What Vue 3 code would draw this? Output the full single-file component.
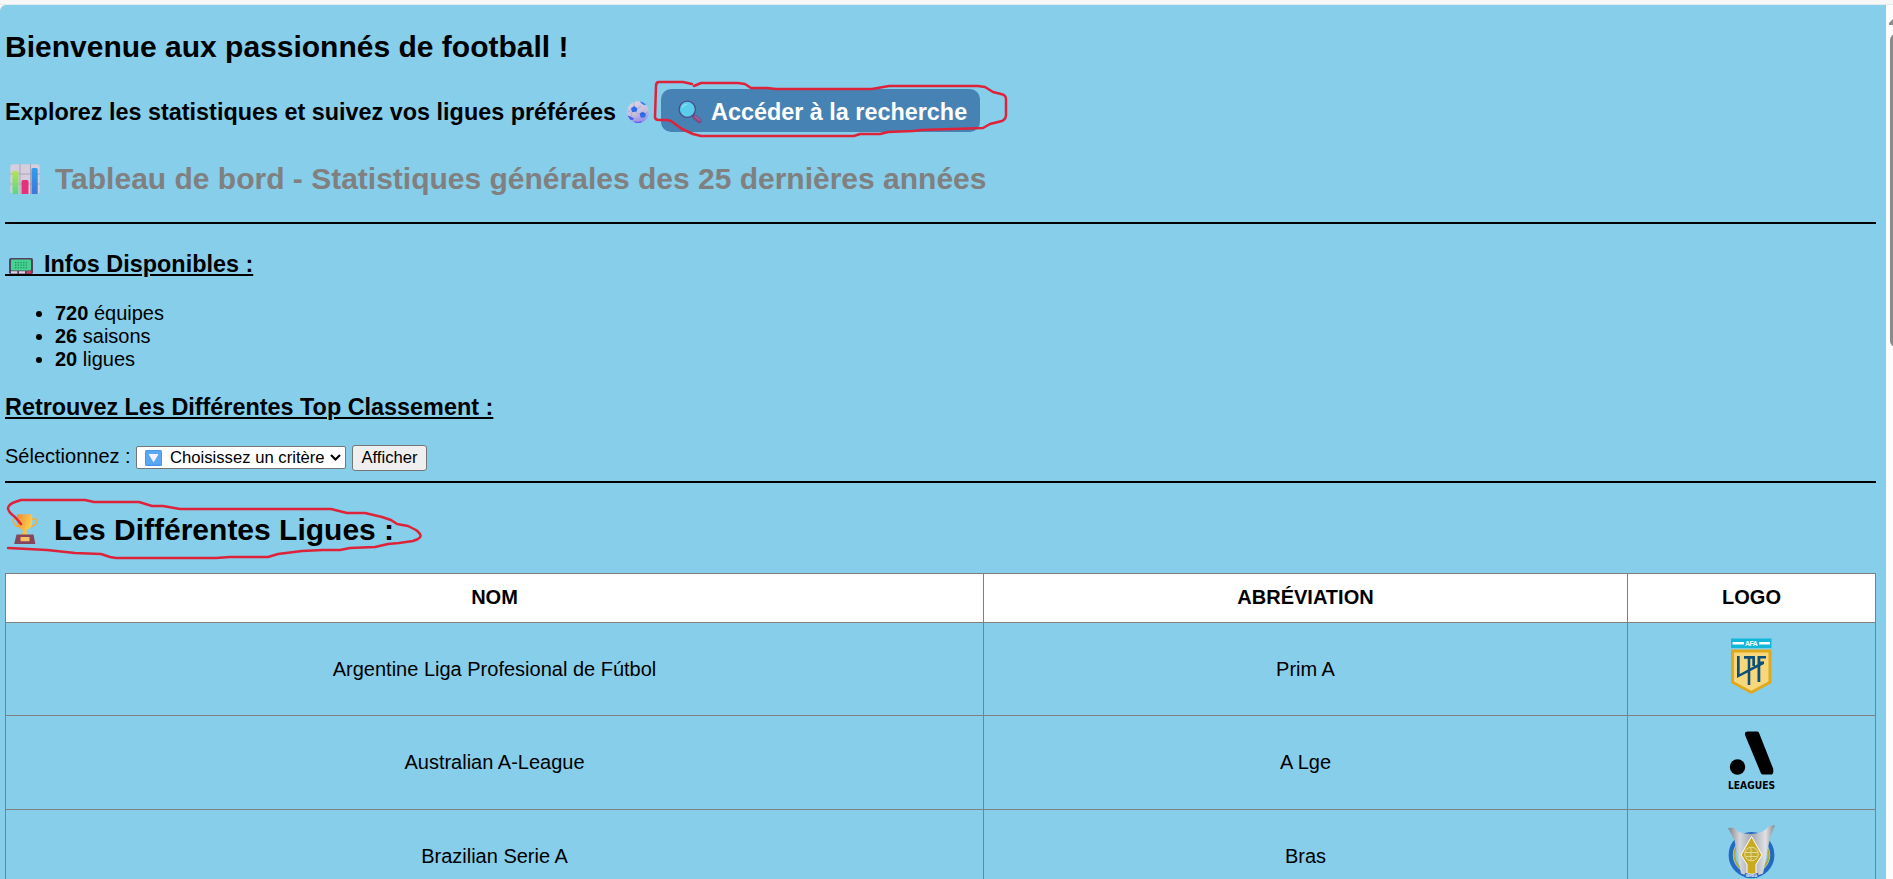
<script setup>
const stats = [
  { n: 720, label: 'équipes' },
  { n: 26, label: 'saisons' },
  { n: 20, label: 'ligues' },
]
const leagues = [
  { name: 'Argentine Liga Profesional de Fútbol', abbr: 'Prim A', logo: 'lpf' },
  { name: 'Australian A-League', abbr: 'A Lge', logo: 'aleague' },
  { name: 'Brazilian Serie A', abbr: 'Bras', logo: 'bras' },
]
</script>

<template>
  <div class="window">
    <div class="chrome"></div>
    <main class="page">
      <h2 class="welcome"><span>Bienvenue aux passionnés de football !</span></h2>

      <h3 class="explore">
        <span class="lead">Explorez les statistiques et suivez vos ligues préférées</span>
        <svg class="ball" viewBox="0 0 22 22">
          <defs>
            <linearGradient id="ballFill" x1=".3" x2=".6" y2="1">
              <stop offset="0" stop-color="#d9d5e6" /><stop offset=".6" stop-color="#c3bbe0" /><stop offset="1" stop-color="#9286ee" />
            </linearGradient>
            <clipPath id="ballClip"><circle cx="11" cy="11" r="10.8" /></clipPath>
          </defs>
          <circle cx="11" cy="11" r="10.8" fill="url(#ballFill)" />
          <g clip-path="url(#ballClip)">
            <path d="M7 5V1M10 8l4-3M4 9 1 11M8.500 11l3 2.500M18.500 12.500l3-2M13 17l-2 3M5 11l-1 4" fill="none" stroke="#a39ac8" stroke-width=".6" />
            <path d="M4 7.200 7.200 5l3.200 2.400-.8 3.400-4.600.2z" fill="#2a6cea" />
            <path d="M12.500 12.500l3.200-1.800 3.200 2-.8 3.500-4.200.5z" fill="#2a6cea" />
            <path d="M12.800.200c1.200 2.200 3 3.600 5.400 4L20 2 14-1z" fill="#2b7df2" />
            <path d="M0 14.500l3 .7L6.800 17.300l-.5 1.500L3 19z" fill="#4a5cf0" />
            <path d="M7 20.200q4 1.500 8 0L14 23H8z" fill="#4a45f5" />
          </g>
        </svg>
        <button class="search">
          <svg class="glass" viewBox="0 0 24 24">
            <path d="M14.500 15.200l2.500 2" stroke="#50407a" stroke-width="2.400" />
            <path d="M17.200 17.400l4 3.400" stroke="#834b86" stroke-width="5" stroke-linecap="round" />
            <path d="M17.200 16.600l4.400 3.600" stroke="#a0629c" stroke-width="1.500" stroke-linecap="round" />
            <circle cx="9.300" cy="9.300" r="8.100" fill="#5bcdec" stroke="#504a86" stroke-width="1.300" />
            <path d="M4.300 7.600c1-2 2.600-3 4.500-3.200" fill="none" stroke="#8fe2f5" stroke-width="1.200" />
          </svg>
          <span>Accéder à la recherche</span>
        </button>
      </h3>

      <h2 class="dashboard">
        <svg class="chart" viewBox="0 0 30 30">
          <rect x=".3" y=".3" width="29.4" height="29.4" rx="2.5" fill="#d4cedd" />
          <path d="M0 10h30M0 20h30M10 0v30M20.5 0v30" stroke="#aaa4b8" stroke-width="1" />
          <path d="M2.400 8.500a1.400 1.400 0 0 1 1.400-1.400H7a1.400 1.400 0 0 1 1.400 1.400V30h-6z" fill="url(#barGreen)" />
          <path d="M11.500 17.500q0-1.500 1.500-1.500h4q1.500 0 1.500 1.500V30h-7z" fill="#e5317b" />
          <path d="M21.500 5.500q0-1.500 1.500-1.500h3.200q1.500 0 1.500 1.500V30h-6.200z" fill="url(#barBlue)" />
          <defs>
            <linearGradient id="barGreen" x2="0" y2="1"><stop stop-color="#b2e64b" /><stop offset="1" stop-color="#59d68b" /></linearGradient>
            <linearGradient id="barBlue" x2="0" y2="1"><stop stop-color="#2f9df0" /><stop offset="1" stop-color="#3b78d8" /></linearGradient>
          </defs>
        </svg>
        <span>Tableau de bord - Statistiques générales des 25 dernières années</span>
      </h2>

      <div class="rule"></div>

      <h3 class="infos">
        <svg class="pager" viewBox="0 0 24 16">
          <rect width="24" height="16" rx="1.8" fill="#56425f" />
          <rect x="2" y="1.6" width="20" height="10.8" rx="1" fill="#43d290" />
          <path d="M6 4.700h12M6 7.200h12M6 9.700h12" stroke="#268f63" stroke-width="1.200" stroke-dasharray="1.300 1.400" />
          <path d="M2 13.200h6.300v2.300H2zM10 13.200h6v2.300h-6z" fill="#ddd5e6" />
          <path d="M17.800 13.200h4.400v2.300h-4.400z" fill="#f0325e" />
        </svg>
        <span>Infos Disponibles :</span>
      </h3>

      <ul class="stats">
        <li v-for="s in stats" :key="s.label"><b>{{ s.n }}</b> {{ s.label }}</li>
      </ul>

      <h3 class="ranking"><span>Retrouvez Les Différentes Top Classement :</span></h3>

      <form class="picker" @submit.prevent>
        <label>Sélectionnez :</label>
        <div class="select">
          <svg class="down" viewBox="0 0 17 16">
            <rect width="17" height="16" rx="1.6" fill="#4a97ea" />
            <rect x="1" y="1" width="15" height="13.5" rx="1" fill="#5aa8f4" />
            <path d="M4.400 4h8.400q.7 0 .4.700L9.200 11.600q-.6.800-1.200 0L4 4.700q-.3-.7.4-.7z" fill="#f5f2fb" />
          </svg>
          <span>Choisissez un critère</span>
          <svg class="caret" viewBox="0 0 11 7"><path d="M1 1l4.500 4.500L10 1" fill="none" stroke="#000" stroke-width="2.100" /></svg>
        </div>
        <button class="show">Afficher</button>
      </form>

      <div class="rule second"></div>

      <h2 class="leagues">
        <svg class="trophy" viewBox="0 0 26 30">
          <defs>
            <linearGradient id="gold" x1="0" x2="1" y2=".5"><stop stop-color="#f08b37" /><stop offset="1" stop-color="#ffd24c" /></linearGradient>
          </defs>
          <path d="M6 5H2.500Q1 5 1.200 7c.3 3.400 3 5.500 6.500 5.700M19 5h4Q24.800 5 24.600 7c-.4 3.400-3 5.300-6.600 5.700" fill="none" stroke="#f3ad3d" stroke-width="1.700" />
          <path d="M5 1.500Q5 .3 6.400.3h12.400q1.400 0 1.400 1.200v7c0 4-2.700 6.400-5.600 7.300v3.400l2.200 2H8.400l2.200-2v-3.400C7.700 14.900 5 12.500 5 8.500z" fill="url(#gold)" />
          <path d="M4.500 20.500h17L23.300 30H2.200z" fill="#85465c" />
          <rect x="8.500" y="23" width="9" height="4.200" rx=".5" fill="#f8c064" />
        </svg>
        <span>Les Différentes Ligues :</span>
      </h2>

      <table class="grid">
        <colgroup><col class="c1" /><col class="c2" /><col class="c3" /></colgroup>
        <thead><tr><th>NOM</th><th>ABRÉVIATION</th><th>LOGO</th></tr></thead>
        <tbody>
          <tr v-for="l in leagues" :key="l.abbr">
            <td>{{ l.name }}</td>
            <td>{{ l.abbr }}</td>
            <td>
              <svg v-if="l.logo === 'lpf'" class="logo" viewBox="1 .5 60 60">
                <rect x="10" y="0" width="40.500" height="9.600" fill="#10b7d9" />
                <path d="M11.500 4.800H23M38 4.800h11" stroke="#fff" stroke-width="2.600" />
                <text x="30.300" y="7.400" text-anchor="middle" font-size="6.800" textLength="12.500" fill="#fff" font-weight="700">AFA</text>
                <path d="M10 11h40.500v33.500L30.300 55.500 10 44.500z" fill="#dfa91a" />
                <path d="M13 14h34.500v29L30.300 52.200 13 43z" fill="#f7d77e" />
                <path d="M16 17.500h2.700V35.500L42.500 22.500v3.200L16 39.500zM23 17.500h11v10h-2.700v-7.300h-2V46.500h-2.600V20.200H23zM36.500 17.500H45v2.600h-5.700v3H43v2.600h-3.700V43.500h-2.800z" fill="#0b5079" />
              </svg>
              <svg v-else-if="l.logo === 'aleague'" class="logo" viewBox="1 1.500 60 60">
                <path d="M27 0h9q1.400 0 2 1.300l14 35.500Q53 42 51 43h-9q-1.500 0-2.200-1.600L24.200 4Q23 0 27 0z" fill="#000" />
                <circle cx="16.500" cy="35.500" r="7.700" fill="#000" />
                <text x="30.500" y="57" text-anchor="middle" font-size="9.800" textLength="47" lengthAdjust="spacingAndGlyphs" class="wide">LEAGUES</text>
              </svg>
              <svg v-else class="logo" viewBox="1 1.500 60 60">
                <defs>
                  <linearGradient id="silver"><stop stop-color="#80838b" /><stop offset=".25" stop-color="#d5d7dc" /><stop offset=".5" stop-color="#a4a8af" /><stop offset=".8" stop-color="#dfe1e5" /><stop offset="1" stop-color="#858991" /></linearGradient>
                </defs>
                <circle cx="30.500" cy="29.500" r="20.800" fill="none" stroke="#2468bf" stroke-width="4.200" />
                <circle cx="30.500" cy="29.500" r="17" fill="none" stroke="#b5a92b" stroke-width="1.800" />
                <path d="M7 2.500 12.500 2Q16 8 30 8.500 44 7.500 47 1l7-1.500-5 13L42 48q-11 5-22 0L13.500 15z" fill="url(#silver)" />
                <path d="M30.500 11 41 29.500 35 39v9q-4.500 1.500-9 0v-9l-6-9.500z" fill="#c9a91e" stroke="#fff" stroke-width="1" />
                <circle cx="30.500" cy="28.500" r="6.800" fill="#c2ab36" stroke="#eee39b" stroke-width=".9" />
                <path d="M24 27h13M25 31h11M30 22v13" stroke="#eee39b" stroke-width=".8" />
                <path d="M23.500 49.500q7 2.500 14 0" fill="none" stroke="#2468bf" stroke-width="4" />
                <text x="30.500" y="51.500" text-anchor="middle" font-size="4" textLength="12" fill="#d7e6fa" font-weight="700">SÉRIE A</text>
                <text x="30.500" y="60.500" text-anchor="middle" font-size="8" textLength="52" fill="#5b9fd0" class="brand">BRASILEIRÃO</text>
              </svg>
            </td>
          </tr>
        </tbody>
      </table>
    </main>

    <aside class="scroll">
      <svg class="up" viewBox="0 0 8 7"><path d="M0 7V5L5 0h3v7z" fill="#8b8b8b" /></svg>
      <div class="thumb"></div>
    </aside>

    <svg class="ink" viewBox="0 0 1893 879">
      <path d="M692 84 683 82H659Q656 82 656 86L655 117Q655 120 659 120H667L671 121 682 129 693 134 701 136H854L860 134 880 134 888 132 913 131 921 130 953 129 983 128 990 124 1002 121Q1006 119 1006 115V99Q1006 95 1001 94L993 92 985 87 978 86H889L872 89H776L767 88H751L745 84 738 83H701L694 86" />
      <path d="M21 524 15 517Q8 512 8 508 9 504 15 502L21 500H85L94 502H139L152 506 163 506 180 509H331L347 513H365L382 517 391 520 397 524 408 526 416 530Q424 536 418 539L413 541 399 543 388 544 375 547 350 548 340 550 323 550 302 551 278 554 268 557H230L216 558H116L110 557 101 554 75 553 47 550 28 549 8 548" />
    </svg>
  </div>
</template>

<style>
body {
  overflow: hidden;
}
</style>

<style scoped>
.window {
  position: relative;
  display: grid;
  grid-template: 5px 874px / 1886px 7px;
  height: 879px;
  overflow: hidden;
  background: #f7f7f7;
  color: #000;
  font: 20px/23px "Liberation Sans", Arial, sans-serif;
}
.chrome {
  grid-column: 1 / 3;
  background: #f7f7f7;
  border-bottom: 1px solid #e4ebef;
  box-sizing: border-box;
}
.page {
  background: #87ceeb;
  border-top-left-radius: 6px;
  padding: 0 10px 0 5px;
  overflow: hidden;
}
h2, h3 {
  display: flex;
  align-items: center;
  margin: 0;
  white-space: nowrap;
}
h2 { font-size: 30px; line-height: 34px; }
h3 { font-size: 23.4px; line-height: 27px; }
svg { display: block; flex: none; }
.welcome { margin-top: 25px; height: 34px; }
.explore { margin-top: 25px; height: 43px; }
.explore span { padding-top: 3px; }
.ball { width: 22px; height: 22px; margin: 3px 0 0 11px; }
.search {
  display: flex;
  align-items: center;
  width: 319px;
  height: 43px;
  margin-left: 12px;
  padding: 0 0 0 17px;
  border: 0;
  border-radius: 10px;
  background: #4682b4;
  color: #fff;
  font: inherit;
}
.glass { width: 24px; height: 24px; margin: 3px 9px 0 0; }
.dashboard { margin-top: 30px; height: 34px; color: #808080; }
.chart { width: 30px; height: 30px; margin: 0 15px 0 5px; }
.rule { height: 2px; margin-top: 26px; background: #000; }
.infos { margin-top: 27px; height: 27px; width: 248px; position: relative; }
.infos span, .ranking span {
  text-decoration: underline;
  text-decoration-thickness: 2px;
  text-underline-offset: 2px;
}
.infos::before {
  content: "";
  position: absolute;
  left: 0;
  bottom: 2px;
  width: 40px;
  height: 2px;
  background: #000;
}
.pager { width: 24px; height: 16px; margin: 3px 11px 0 4px; }
.stats { margin: 24px 0 0; padding: 0 0 0 50px; }
.ranking { margin-top: 23px; height: 27px; }
.picker { display: flex; align-items: flex-start; margin-top: 24px; height: 28px; }
.picker label { width: 131px; white-space: nowrap; }
.select {
  display: flex;
  align-items: center;
  box-sizing: border-box;
  width: 210px;
  height: 23px;
  margin-top: 1px;
  padding-left: 8px;
  border: 1px solid #767676;
  border-radius: 2px;
  background: #fff;
  font-size: 16.67px;
  white-space: nowrap;
}
.down { width: 17px; height: 16px; margin-right: 8px; }
.caret { width: 11px; height: 7px; margin-left: 5px; }
.show {
  box-sizing: border-box;
  width: 75px;
  height: 26px;
  margin-left: 6px;
  padding: 0;
  border: 1px solid #767676;
  border-radius: 3px;
  background: #efefef;
  color: #000;
  font: 16.67px "Liberation Sans", Arial, sans-serif;
}
.second { margin-top: 8px; }
.leagues { margin-top: 30px; height: 34px; }
.trophy { width: 26px; height: 30px; margin: 0 16px 2px 7px; }
.grid {
  margin-top: 26px;
  width: 1871px;
  table-layout: fixed;
  border-collapse: collapse;
  text-align: center;
}
.c1 { width: 978px; }
.c2 { width: 644px; }
th, td { padding: 0; border: 1px solid #808080; }
th { height: 48px; background: #fff; padding-bottom: 2px; box-sizing: border-box; }
thead tr { height: 49px; }
tbody tr { height: 94px; }
tbody tr:first-child { height: 93px; }
.logo { width: 60px; height: 60px; margin: 0 auto; overflow: visible; }
.wide { font-family: "DejaVu Sans", sans-serif; font-weight: 700; }
.brand { font-weight: 700; }
.scroll { background: #fcfcfc; overflow: hidden; }
.up { width: 8px; height: 7px; margin: 13px 0 0 3px; }
.thumb {
  width: 12px;
  height: 313px;
  margin: 9px 0 0 4px;
  border-radius: 6px;
  background: #8b8b8b;
}
.ink {
  position: absolute;
  left: 0;
  top: 0;
  width: 1893px;
  height: 879px;
  pointer-events: none;
}
.ink path {
  fill: none;
  stroke: #dd2339;
  stroke-width: 2.5;
  stroke-linejoin: round;
  stroke-linecap: round;
}
</style>
